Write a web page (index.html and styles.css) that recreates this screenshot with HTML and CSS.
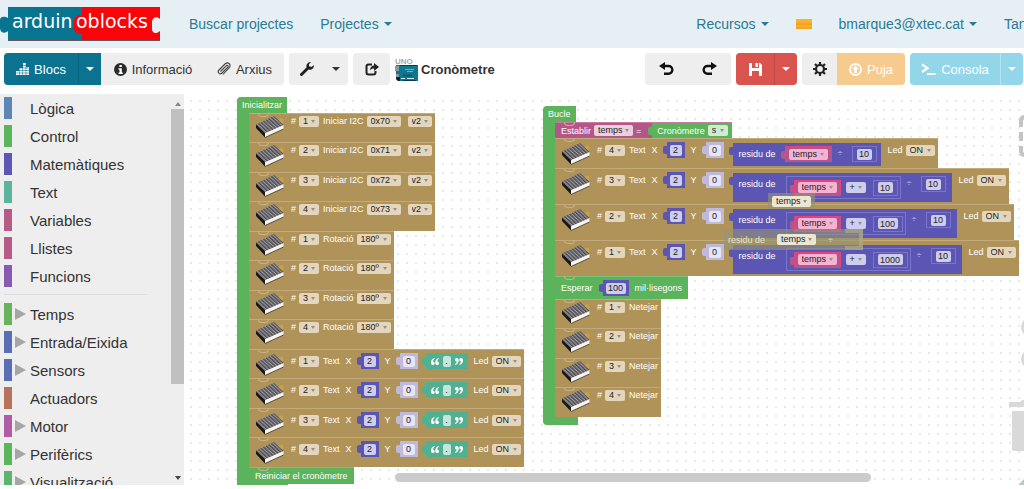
FILE: index.html
```html
<!DOCTYPE html>
<html lang="ca">
<head>
<meta charset="utf-8">
<title>Cronòmetre - arduinoblocks</title>
<link rel="stylesheet" href="styles.css">
</head>
<body>
<svg class="defs" aria-hidden="true">
  <defs>
    <pattern id="leds" width="1" height="1" patternUnits="userSpaceOnUse" patternTransform="matrix(2.57 -1.21 1.29 1.21 0 9.5)">
      <rect width="1" height="1" fill="#26262c"/><rect x=".15" y=".15" width=".62" height=".62" fill="#e2e2e8"/>
    </pattern>
    <symbol id="matrix" viewBox="0 0 28 23">
      <circle cx="25" cy="6" r="2.5" fill="#c9a04c"/>
      <path d="M0 9.500 9 18v4.500L0 13z" fill="#17171a"/>
      <path d="m9 18 18.500-8v4L9 22.500z" fill="#f6f4f0"/>
      <path d="M0 9.500 18 1l9.500 9L9 18z" fill="url(#leds)"/>
      <path d="m9 22.500 18.500-8.500" stroke="#3a3328" stroke-width=".8"/>
    </symbol>
    <symbol id="quote" viewBox="0 0 8 7"><path d="M3.500 0C1.200.7 0 2.200 0 4.400 0 6 .8 7 2 7s1.700-.8 1.700-1.700S3 3.700 2 3.700C2 2.500 2.600 1.500 3.700.8zM7.800 0C5.500.7 4.300 2.200 4.300 4.400 4.300 6 5.100 7 6.300 7S8 6.200 8 5.300s-.7-1.600-1.700-1.600c0-1.200.6-2.200 1.700-2.900z" fill="#fff"/></symbol>
  </defs>
</svg>

<header class="topbar">
  <a class="logo" href="#" aria-label="arduinoblocks">
    <svg width="160" height="36" viewBox="0 0 160 36">
      <path d="M8 1h76v33H8v-9c-3 3-8 2-8-3v-8c0-4 5-4 8-2z" fill="#087590"/>
      <path d="M82 1h78v12c-3-3-8-2-8 3v7c0 5 5 5 8 2v9H82v-7c-4 2-8-1-8-5v-7c0-4 4-7 8-5z" fill="#f80409"/>
      <path d="M8 34h152v1H8z" fill="#6f5560"/>
      <text x="12" y="22" class="logo-text">arduin</text>
      <text x="76" y="22" class="logo-text">oblocks</text>
    </svg>
  </a>
  <nav class="nav">
    <a href="#">Buscar projectes</a>
    <a href="#">Projectes <i class="caret"></i></a>
  </nav>
  <nav class="nav nav-right">
    <a href="#">Recursos <i class="caret"></i></a>
    <a href="#" aria-label="Idioma"><i class="flag"></i></a>
    <a href="#">bmarque3@xtec.cat <i class="caret"></i></a>
    <a href="#" class="logout">Tancar</a>
  </nav>
</header>

<div class="toolbar">
  <div class="group">
    <button class="btn teal blocs"><svg width="13" height="12" viewBox="0 0 13 12"><path d="M0 8h3v4H0zM3.500 5h3v7h-3zM7 0h2.700v12H7zM10.300 4H13v8h-2.700z" fill="#fff"/><path d="M0 10h13M0 7.500h13M0 5h13M0 2.500h13" stroke="#0b7390" stroke-width=".6"/></svg>Blocs</button>
    <button class="btn teal split" aria-label="Més blocs"><i class="caret"></i></button>
    <button class="btn info"><svg width="13" height="13" viewBox="0 0 13 13"><circle cx="6.500" cy="6.500" r="6.500" fill="#2b2b2b"/><path d="M5.400 2h2.400v2H5.400zM4.500 5.200h3.300V9.500h1V11H4.500V9.500h1V6.700h-1z" fill="#fff"/></svg>Informació</button>
    <button class="btn files"><svg width="14" height="14" viewBox="0 0 14 14"><path d="m3.500 9.500 5.700-5.700c1.200-1.200 2.700.3 1.500 1.500L5 11c-2.200 2.200-5.200-.7-3-3l6-6c3-3 7 1 4 4l-6 6.500" fill="none" stroke="#444" stroke-width="1.100"/></svg>Arxius</button>
  </div>
  <div class="group">
    <button class="btn tool" aria-label="Eines"><svg width="14" height="14" viewBox="0 0 14 14"><path d="m1.500 12.500 6-6" stroke="#222" stroke-width="3" stroke-linecap="round"/><path d="M11 0C8 0 6 2.300 6.500 5c.4 2 2 3 4 2.700C12.700 7.300 14 5.500 14 3l-2.600 2-2.300-.7-.2-2z" fill="#222"/></svg></button>
    <button class="btn mini" aria-label="Més eines"><i class="caret"></i></button>
  </div>
  <button class="btn share group" aria-label="Comparteix"><svg width="14" height="13" viewBox="0 0 14 13"><path d="M7 1.500H3.500q-2 0-2 2v6q0 2 2 2h5q2 0 2-2V8" fill="none" stroke="#222" stroke-width="2"/><path d="M9 0l5 4-5 4V5.500c-2 0-3 .5-4 2 0-3 1.500-5 4-5z" fill="#222"/></svg></button>
  <h1 class="project">
    <svg width="23" height="25" viewBox="0 0 23 25"><text x="0" y="7" class="uno">UNO</text><path d="M1 8h22v16H3l-2-2z" fill="#0d7890"/><path d="M0 9h4v5H0zM1 17h3v5H1z" fill="#8b9da3"/><path d="M5 8.500h17M8 23.500h13" stroke="#0b3a4c"/><path d="M10 12.500h9M12 14.500h6" stroke="#7fc0cf" stroke-width=".8"/><path d="M8 18.500h9" stroke="#0a5a70" stroke-width="2"/><path d="M6 21.500h4M12 21.500h7" stroke="#d8e8ec"/><path d="M1 20h4v4H3l-2-2z" fill="#123"/></svg>
    Cronòmetre
  </h1>
  <div class="actions">
    <div class="group">
      <button class="btn undo" aria-label="Desfés"><svg width="15" height="14" viewBox="0 0 15 14"><path d="M4 4h5.500a3.800 3.800 0 0 1 0 7.700H5" fill="none" stroke="#111" stroke-width="2.400"/><path d="M0 4 6 0v8z" fill="#111"/></svg></button>
      <button class="btn undo" aria-label="Refés"><svg width="15" height="14" viewBox="0 0 15 14"><path d="M11 4H5.500a3.800 3.800 0 0 0 0 7.700H10" fill="none" stroke="#111" stroke-width="2.400"/><path d="M15 4 9 0v8z" fill="#111"/></svg></button>
    </div>
    <div class="group">
      <button class="btn red save" aria-label="Desa"><svg width="13" height="13" viewBox="0 0 13 13"><path d="M0 0h11l2 2v11H0z" fill="#fff"/><path d="M3 0h7v5H3zM3 8h7v5H3z" fill="#d9534f"/><path d="M6.500 0H9v4H6.500z" fill="#fff"/></svg></button>
      <button class="btn red split" aria-label="Opcions de desar"><i class="caret"></i></button>
    </div>
    <div class="group gear-group">
      <button class="btn gear" aria-label="Configuració"><svg width="14" height="14" viewBox="0 0 14 14"><circle cx="7" cy="7" r="4" fill="none" stroke="#222" stroke-width="2.200"/><path d="M7 0v3M7 11v3M0 7h3M11 7h3M2 2l2 2M10 10l2 2M12 2l-2 2M4 10l-2 2" stroke="#222" stroke-width="2.200"/></svg></button>
      <button class="btn orange"><svg width="13" height="13" viewBox="0 0 13 13"><circle cx="6.500" cy="6.500" r="5.500" fill="none" stroke="#fff" stroke-width="1.800"/><path d="m6.500 2.500 3.300 3.700h-2V10H5.200V6.200h-2z" fill="#fff"/></svg>Puja</button>
    </div>
    <div class="group">
      <button class="btn sky"><svg width="15" height="12" viewBox="0 0 15 12"><path d="m1 1.500 5.500 3.700L1 9" fill="none" stroke="#fff" stroke-width="2.200"/><path d="M6 11h8.500" stroke="#fff" stroke-width="2"/></svg>Consola</button>
      <button class="btn sky split" aria-label="Opcions de consola"><i class="caret"></i></button>
    </div>
  </div>
</div>

<main class="editor">
  <aside class="toolbox">
    <ul class="cats">
      <li class="c-logic">Lògica</li>
      <li class="c-green">Control</li>
      <li class="c-math">Matemàtiques</li>
      <li class="c-text">Text</li>
      <li class="c-var">Variables</li>
      <li class="c-var">Llistes</li>
      <li class="c-func">Funcions</li>
      <li class="rule"></li>
      <li class="c-time more">Temps</li>
      <li class="c-io more">Entrada/Eixida</li>
      <li class="c-io more">Sensors</li>
      <li class="c-act">Actuadors</li>
      <li class="c-motor more">Motor</li>
      <li class="c-green more">Perifèrics</li>
      <li class="c-vis more">Visualització</li>
    </ul>
    <div class="scroll"><i class="up"></i><div class="thumb"></div><i class="down"></i></div>
  </aside>

  <section class="canvas">
    <div class="stack init">
      <div class="cap">Inicialitzar</div>
      <div class="body">
        <div class="row"><svg class="mx"><use href="#matrix"/></svg><label># <select class="w20"><option>1</option></select></label><label>Iniciar I2C <select class="w34"><option>0x70</option></select></label><span class="apart"><select class="w24" aria-label="Versió"><option>v2</option></select></span></div>
        <div class="row"><svg class="mx"><use href="#matrix"/></svg><label># <select class="w20"><option>2</option></select></label><label>Iniciar I2C <select class="w34"><option>0x71</option></select></label><span class="apart"><select class="w24" aria-label="Versió"><option>v2</option></select></span></div>
        <div class="row"><svg class="mx"><use href="#matrix"/></svg><label># <select class="w20"><option>3</option></select></label><label>Iniciar I2C <select class="w34"><option>0x72</option></select></label><span class="apart"><select class="w24" aria-label="Versió"><option>v2</option></select></span></div>
        <div class="row"><svg class="mx"><use href="#matrix"/></svg><label># <select class="w20"><option>4</option></select></label><label>Iniciar I2C <select class="w34"><option>0x73</option></select></label><span class="apart"><select class="w24" aria-label="Versió"><option>v2</option></select></span></div>
        <div class="row"><svg class="mx"><use href="#matrix"/></svg><label># <select class="w20"><option>1</option></select></label><label>Rotació <select class="w34"><option>180º</option></select></label></div>
        <div class="row"><svg class="mx"><use href="#matrix"/></svg><label># <select class="w20"><option>2</option></select></label><label>Rotació <select class="w34"><option>180º</option></select></label></div>
        <div class="row"><svg class="mx"><use href="#matrix"/></svg><label># <select class="w20"><option>3</option></select></label><label>Rotació <select class="w34"><option>180º</option></select></label></div>
        <div class="row"><svg class="mx"><use href="#matrix"/></svg><label># <select class="w20"><option>4</option></select></label><label>Rotació <select class="w34"><option>180º</option></select></label></div>
        <div class="row tall"><svg class="mx"><use href="#matrix"/></svg><label># <select class="w20"><option>1</option></select></label><span class="word">Text</span><label class="axis">X <span class="val math"><input value="2"></span></label><label class="axis">Y <span class="val shade"><input value="0"></span></label><span class="val str"><svg width="8" height="7"><use href="#quote"/></svg><input value="." aria-label="Text"><svg width="8" height="7" class="flip"><use href="#quote"/></svg></span><label class="led">Led <select class="w29"><option>ON</option></select></label></div>
        <div class="row tall"><svg class="mx"><use href="#matrix"/></svg><label># <select class="w20"><option>2</option></select></label><span class="word">Text</span><label class="axis">X <span class="val math"><input value="2"></span></label><label class="axis">Y <span class="val shade"><input value="0"></span></label><span class="val str"><svg width="8" height="7"><use href="#quote"/></svg><input value="." aria-label="Text"><svg width="8" height="7" class="flip"><use href="#quote"/></svg></span><label class="led">Led <select class="w29"><option>ON</option></select></label></div>
        <div class="row tall"><svg class="mx"><use href="#matrix"/></svg><label># <select class="w20"><option>3</option></select></label><span class="word">Text</span><label class="axis">X <span class="val math"><input value="2"></span></label><label class="axis">Y <span class="val shade"><input value="0"></span></label><span class="val str"><svg width="8" height="7"><use href="#quote"/></svg><input value="." aria-label="Text"><svg width="8" height="7" class="flip"><use href="#quote"/></svg></span><label class="led">Led <select class="w29"><option>ON</option></select></label></div>
        <div class="row tall"><svg class="mx"><use href="#matrix"/></svg><label># <select class="w20"><option>4</option></select></label><span class="word">Text</span><label class="axis">X <span class="val math"><input value="2"></span></label><label class="axis">Y <span class="val shade"><input value="0"></span></label><span class="val str"><svg width="8" height="7"><use href="#quote"/></svg><input value="." aria-label="Text"><svg width="8" height="7" class="flip"><use href="#quote"/></svg></span><label class="led">Led <select class="w29"><option>ON</option></select></label></div>
        <div class="row plain">Reiniciar el cronòmetre</div>
      </div>
      <div class="foot"></div>
    </div>

    <div class="stack loop">
      <div class="cap">Bucle</div>
      <div class="body">
        <div class="row assign"><label>Establir <select class="w39"><option>temps</option></select></label><span>=</span><span class="val timer"><label>Cronòmetre <select class="w20"><option>s</option></select></label></span></div>

        <div class="row tall"><svg class="mx"><use href="#matrix"/></svg><label># <select class="w20"><option>4</option></select></label><span class="word">Text</span><label class="axis">X <span class="val math"><input value="2"></span></label><label class="axis">Y <span class="val shade"><input value="0"></span></label>
          <span class="val mod"><span class="word">residu de</span><span class="val var"><select class="w39" aria-label="Variable"><option>temps</option></select></span><span class="op">÷</span><span class="val num"><input value="10" aria-label="Divisor"></span></span>
          <label class="led">Led <select class="w29"><option>ON</option></select></label></div>

        <div class="row tall deep"><svg class="mx"><use href="#matrix"/></svg><label># <select class="w20"><option>3</option></select></label><span class="word">Text</span><label class="axis">X <span class="val math"><input value="2"></span></label><label class="axis">Y <span class="val shade"><input value="0"></span></label>
          <span class="val mod"><span class="word">residu de</span><span class="val sum"><span class="val var"><select class="w39" aria-label="Variable"><option>temps</option></select></span><select class="w20" aria-label="Operació"><option>+</option></select><span class="val num"><input value="10" aria-label="Sumand"></span></span><span class="op">÷</span><span class="val num"><input value="10" aria-label="Divisor"></span></span>
          <label class="led">Led <select class="w29"><option>ON</option></select></label></div>

        <div class="row tall deep"><svg class="mx"><use href="#matrix"/></svg><label># <select class="w20"><option>2</option></select></label><span class="word">Text</span><label class="axis">X <span class="val math"><input value="2"></span></label><label class="axis">Y <span class="val shade"><input value="0"></span></label>
          <span class="val mod"><span class="word">residu de</span><span class="val sum"><span class="val var"><select class="w39" aria-label="Variable"><option>temps</option></select></span><select class="w20" aria-label="Operació"><option>+</option></select><span class="val num hundreds"><input value="100" aria-label="Sumand"></span></span><span class="op">÷</span><span class="val num"><input value="10" aria-label="Divisor"></span></span>
          <label class="led">Led <select class="w29"><option>ON</option></select></label></div>

        <div class="row tall deep"><svg class="mx"><use href="#matrix"/></svg><label># <select class="w20"><option>1</option></select></label><span class="word">Text</span><label class="axis">X <span class="val math"><input value="2"></span></label><label class="axis">Y <span class="val shade"><input value="0"></span></label>
          <span class="val mod"><span class="word">residu de</span><span class="val sum"><span class="val var"><select class="w39" aria-label="Variable"><option>temps</option></select></span><select class="w20" aria-label="Operació"><option>+</option></select><span class="val num thousands"><input value="1000" aria-label="Sumand"></span></span><span class="op">÷</span><span class="val num"><input value="10" aria-label="Divisor"></span></span>
          <label class="led">Led <select class="w29"><option>ON</option></select></label></div>

        <div class="row wait"><label>Esperar <span class="val math hundreds"><input value="100"></span></label><span>mil·lisegons</span></div>
        <div class="row"><svg class="mx"><use href="#matrix"/></svg><label># <select class="w20"><option>1</option></select></label><span>Netejar</span></div>
        <div class="row"><svg class="mx"><use href="#matrix"/></svg><label># <select class="w20"><option>2</option></select></label><span>Netejar</span></div>
        <div class="row"><svg class="mx"><use href="#matrix"/></svg><label># <select class="w20"><option>3</option></select></label><span>Netejar</span></div>
        <div class="row"><svg class="mx"><use href="#matrix"/></svg><label># <select class="w20"><option>4</option></select></label><span>Netejar</span></div>
      </div>
      <div class="foot"></div>
    </div>

    <div class="ghost ghost-var"><select class="w39" aria-label="Variable solta"><option>temps</option></select></div>
    <div class="ghost ghost-mod"><span>residu de</span><select class="w39" aria-label="Variable solta"><option>temps</option></select><span>÷</span><i class="hole"></i></div>

    <svg class="controls" width="16" height="391" viewBox="0 0 16 391" aria-hidden="true">
      <g fill="none" stroke="#c4c4c4" stroke-width="4"><path d="M17 23q-4 0-4 4v6M13 38v9M13 52v5q0 4 4 4"/></g>
      <g fill="#d9d9d9"><circle cx="23" cy="233" r="10"/><circle cx="23" cy="265" r="10"/><path d="M1 308h11l2-2h2v7H1zM4 317h12v40H6q-2 0-2-2z"/></g>
      <path d="m10 391 6-6v6z" fill="#b9cac8"/>
    </svg>
    <div class="hscroll"></div>
  </section>
</main>
</body>
</html>
```
FILE: styles.css
```css
* { box-sizing: border-box; }

body {
  margin: 0;
  height: 100vh;
  display: flex;
  flex-direction: column;
  overflow: hidden;
  background: #fff;
  color: #333;
  font-family: "Liberation Sans", Arial, sans-serif;
  font-size: 13px;
}

.defs { position: absolute; width: 0; height: 0; }
button, input, select { font: inherit; color: inherit; border: 0; margin: 0; padding: 0; }
svg { flex: none; display: block; }

.caret {
  display: inline-block;
  border: 4px solid transparent;
  border-top-color: currentColor;
  border-bottom: 0;
}

/* Top bar */
.topbar {
  flex: none;
  height: 48px;
  display: flex;
  align-items: center;
  background: #e6eff3;
  overflow: hidden;
}
.logo-text { font: 19px "DejaVu Sans", sans-serif; fill: #fff; }
.nav { display: flex; align-items: center; gap: 27px; padding-left: 29px; font-size: 14px; white-space: nowrap; }
.nav a { display: flex; align-items: center; gap: 5px; color: #2a7a94; text-decoration: none; }
.nav-right { margin-left: auto; }
.flag { width: 16px; height: 10px; background: linear-gradient(#f6b32b 40%, #f08d1d 50%, #f6b32b 60%, #f3a526); }
.nav .logout { display: block; width: 20px; overflow: hidden; }

/* Toolbar */
.toolbar { flex: none; display: flex; align-items: center; gap: 5px; padding: 5px 1px 9px 4px; }
.group { display: flex; background: #eee; border-radius: 4px; overflow: hidden; }
.btn {
  height: 32px;
  display: flex;
  align-items: center;
  justify-content: center;
  gap: 5px;
  background: #eee;
  white-space: nowrap;
}
.teal { background: #0b7390; color: #fff; }
.blocs { width: 74px; }
.split { width: 23px; border-left: 1px solid rgba(0, 0, 0, .12); }
.info { width: 104px; }
.files { width: 79px; }
.tool { width: 35px; }
.mini { width: 24px; }
.share { width: 37px; }
.project { display: flex; align-items: center; gap: 3px; margin: 0; font-size: 13px; }
.uno { font: bold 8px "Liberation Sans", sans-serif; fill: #aaa; }
.actions { margin-left: auto; display: flex; gap: 5px; }
.undo { width: 43px; }
.red { background: #d9534f; color: #fff; }
.save { width: 38px; }
.gear { width: 35px; }
.orange { width: 68px; background: #f7cb8d; color: #fff; }
.sky { width: 90px; background: #93d6ea; color: #fff; }
.sky.split { width: 23px; border-left-color: #b8e4f1; }

/* Toolbox */
.editor { flex: 1; min-height: 0; display: flex; padding-bottom: 4px; }
.toolbox { flex: none; width: 184px; display: flex; background: #eee; overflow: hidden; }
.cats { flex: 1; margin: 0; padding: 0 0 0 4px; list-style: none; font-size: 15px; }
.cats li {
  height: 22px;
  margin: 3px 0 6px;
  padding-left: 18px;
  border-left: 8px solid var(--cat);
  line-height: 23px;
  display: flex;
  align-items: center;
}
.cats .more { padding-left: 3px; gap: 4px; }
.more::before { content: ""; border: 6px solid transparent; border-left: 11px solid #a6a6a6; border-right: 0; }
.cats .rule { height: 1px; margin: 7px 24px 8px 0; padding: 0; border: 0; background: #ddd; }
.c-logic { --cat: #5b86b5; }
.c-green { --cat: #5bb55b; }
.c-math { --cat: #5b57b3; }
.c-text { --cat: #5bb39a; }
.c-var { --cat: #b55b87; }
.c-func { --cat: #865bb0; }
.c-time { --cat: #68b35b; }
.c-io { --cat: #5b6db5; }
.c-act { --cat: #b5735b; }
.c-motor { --cat: #b05ba5; }
.c-vis { --cat: #5bb56c; }
.scroll { width: 13px; display: flex; flex-direction: column; align-items: center; padding: 8px 0 5px; }
.thumb { width: 13px; height: 275px; margin: 3px 0 auto; background: #c0c0c0; }
.up { border: 3px solid transparent; border-bottom: 4px solid #888; border-top: 0; }
.down { border: 3px solid transparent; border-top: 4px solid #444; border-bottom: 0; }

/* Workspace */
.canvas {
  flex: 1;
  position: relative;
  overflow: hidden;
  background: radial-gradient(circle at 7px 7px, #e9e9e9 1px, transparent 1px) 0 0 / 9px 9px;
  color: #fff;
  font-size: 9px;
  line-height: 12px;
}
.stack { position: absolute; }
.init { left: 53px; top: 3px; }
.loop { left: 359px; top: 12px; }
.cap {
  width: max-content;
  padding: 2px 5px;
  background: #5bb35b;
  border-radius: 4px 0 0 0;
}
.body {
  display: flex;
  flex-direction: column;
  align-items: flex-start;
  border-left: 12px solid #5bb35b;
}
.foot { width: 51px; height: 8px; background: #5bb35b; border-radius: 0 0 0 4px; }
.loop .foot { width: 35px; }

.row {
  position: relative;
  display: flex;
  align-items: flex-start;
  gap: 4px;
  height: 29px;
  padding: 1px 3px 0 7px;
  border-top: 1px solid #c3aa7c;
  background: #b09359;
  white-space: nowrap;
}
.row:nth-child(even) { height: 30px; }
.row::before {
  content: "";
  position: absolute;
  left: 9px;
  top: -1px;
  width: 9px;
  height: 3px;
  border: 1px solid #c8b184;
  border-top: 0;
  border-radius: 0 0 4px 4px;
}
.row label, .row > span { display: flex; align-items: center; gap: 3px; height: 12px; }
.mx { width: 28px; height: 23px; margin-right: 3px; }
.row .apart { margin-left: 3px; }
.row.tall { padding-top: 3px; }
.row.tall label, .row.tall > .word { height: 16px; }
.axis { margin-left: 2px; }
.row .axis { gap: 5px; }
.row.deep { height: 36px; }
.row .led { margin-left: 2px; }
.row.plain { height: 17px; padding: 2px 6px; background: #5bb35b; border-color: #79c279; }
.row.assign { height: 16px; padding: 0 0 0 6px; background: #b5568a; border-color: #c77ba4; gap: 3px; }
.row.assign label, .row.assign > span { height: 15px; }
.row.wait { height: 23px; padding: 3px 6px 0 6px; background: #5bb35b; border-color: #79c279; gap: 6px; }
.row.wait label, .row.wait > span { height: 16px; }
.row.wait label { gap: 6px; }

select {
  flex: none;
  appearance: none;
  height: 11px;
  padding-left: 4px;
  border-radius: 2px;
  background: #e3d6bd url("data:image/svg+xml,%3Csvg xmlns='http://www.w3.org/2000/svg' width='4' height='3'%3E%3Cpath d='M0 0h4L2 3z' fill='%23998f80'/%3E%3C/svg%3E") no-repeat right 4px center;
  color: #222;
  line-height: 11px;
}
.w20 { width: 20px; }
.w24 { width: 24px; }
.w29 { width: 29px; }
.w34 { width: 34px; }
.w39 { width: 39px; }
.assign select { background-color: #ecd0de; }
.assign .timer select { background-color: #d0ecd0; }

/* Value blocks plug into a row through a small tab on their left side */
.val {
  --fill: #5b55b3;
  position: relative;
  display: flex;
  align-items: center;
  height: 16px;
  margin-left: 4px;
  padding: 0 3px;
  background: var(--fill);
}
.val::before {
  content: "";
  position: absolute;
  left: -4px;
  top: 4px;
  width: 4px;
  height: 8px;
  background: var(--fill);
  border-radius: 2px 0 0 2px;
}
.val input {
  width: 12px;
  height: 11px;
  border-radius: 2px;
  background: #cfcdee;
  color: #222;
  text-align: center;
}
.row .math, .row .shade, .row .str { height: 16px; }
.row .shade { --fill: #bfb9dc; }
.shade input { background: #e8e5f7; }
.row .str { --fill: #52b092; gap: 4px; padding: 0 5px; margin-left: 4px; }
.str input { width: 8px; background: #c5e6dc; }
.flip { transform: rotate(180deg); }
.row .timer { --fill: #5bb35b; padding: 0 4px 0 5px; margin-left: 8px; }
.hundreds input { width: 20px; }
.thousands input { width: 25px; }

.row .mod { align-items: flex-start; height: 23px; margin: 1px 1px 0 5px; padding: 3px 4px 0 6px; gap: 6px; }
.row .mod .word { height: 16px; line-height: 16px; }
.row.deep .mod { height: 29px; padding-right: 6px; }
.mod .val { border: 1px solid #7a75c8; margin-left: 3px; }
.mod .val::before { left: -5px; }
.mod .num { padding: 0 4px; }
.mod .num input { width: 15px; }
.mod .num.hundreds input { width: 20px; }
.mod .num.thousands input { width: 25px; }
.mod .var { --fill: #b5568a; border-color: #e0457d; padding: 0 3px; }
.mod .var select { background-color: #f5b2d2; }
.mod .sum { height: 23px; gap: 5px; padding: 0 2px 0 4px; margin-left: 4px; }
.mod .sum > select { background-color: #cfcdee; }
.sum .num { margin-left: 2px; }
.op { line-height: 14px; color: #c9c7ec; }

/* Loose blocks lying over the loop */
.ghost { position: absolute; display: flex; align-items: center; background: rgba(150, 150, 115, .6); color: #e6e3c8; }
.ghost select { background-color: #ece7d2; }
.ghost-var { left: 584px; top: 99px; height: 16px; padding: 0 4px; }
.ghost-mod { left: 540px; top: 135px; height: 21px; padding: 0 0 0 4px; gap: 12px; }
.hole { width: 18px; height: 21px; border: 4px solid rgba(180, 178, 130, .6); border-left: 0; }

.controls { position: absolute; right: 0; top: 0; }
.hscroll { position: absolute; left: 211px; right: 153px; bottom: 3px; height: 9px; border-radius: 5px; background: #cbcbcb; }
```
